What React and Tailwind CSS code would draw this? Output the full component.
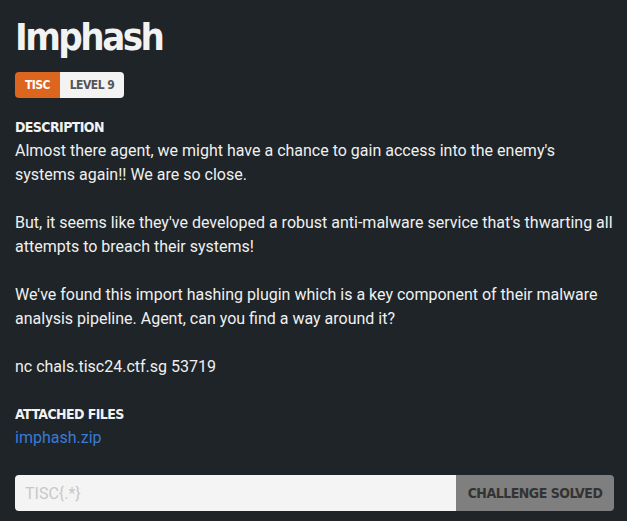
import React from 'react'

const head = { fontFamily: '"DejaVu Sans Condensed", "DejaVu Sans", sans-serif' }

export default function App() {
  return (
    <div className="min-h-screen w-full bg-[#1e2428] pl-[15px] pr-[8px] pt-[14px] text-[#f2f2f2]" style={{ fontFamily: 'Roboto, sans-serif' }}>
      <h1 className="text-[38px] font-bold leading-[46px] tracking-[-2.5px]" style={head}>Imphash</h1>

      <div className="mt-[12px] flex">
        <span className="flex h-[26px] w-[45px] items-center justify-center rounded-l-[4px] bg-[#dd661e] text-[12px] font-bold tracking-[-0.5px] text-white" style={head}>TISC</span>
        <span className="flex h-[26px] w-[64px] items-center justify-center rounded-r-[4px] bg-[#f3f3f3] text-[12px] font-bold tracking-[-0.5px] text-[#555]" style={head}>LEVEL 9</span>
      </div>

      <div className="mt-[20px] text-[14px] font-bold leading-[18px] tracking-[-0.6px]" style={head}>DESCRIPTION</div>
      <div className="mt-[3px] text-[16px] leading-[24px] text-[#f0f0f0]">
        <p>Almost there agent, we might have a chance to gain access into the enemy's systems again!! We are so close.</p>
        <p className="mt-[24px]">But, it seems like they've developed a robust anti-malware service that's thwarting all attempts to breach their systems!</p>
        <p className="mt-[24px]">We've found this import hashing plugin which is a key component of their malware analysis pipeline. Agent, can you find a way around it?</p>
        <p className="mt-[24px]">nc chals.tisc24.ctf.sg 53719</p>
      </div>

      <div className="mt-[26px] text-[14px] font-bold leading-[18px] tracking-[-0.6px]" style={head}>ATTACHED FILES</div>
      <a className="mt-[3px] block text-[16px] leading-[24px] text-[#3a7bd5]">imphash.zip</a>

      <div className="mt-[25px] flex h-[36px] w-[599px]">
        <input
          placeholder="TISC{.*}"
          className="h-full flex-1 rounded-l-[4px] bg-[#f4f4f4] px-[10px] text-[16px] text-black outline-none placeholder:text-[#c8c8c8]"
        />
        <button className="flex h-full w-[158px] items-center justify-center rounded-r-[4px] bg-[#7f7f7f] text-[14px] font-bold tracking-[-0.5px] text-[#333]" style={head}>
          CHALLENGE SOLVED
        </button>
      </div>
    </div>
  )
}
